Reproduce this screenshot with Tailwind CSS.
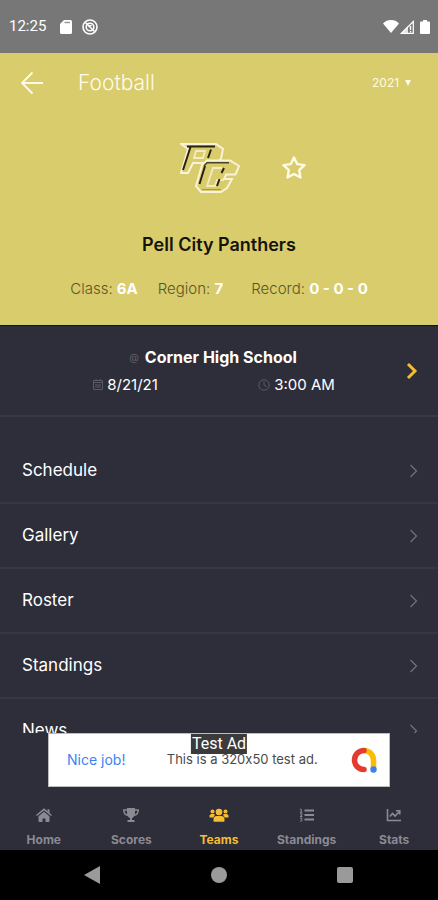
<!DOCTYPE html>
<html lang="en">
  <head>
    <meta charset="UTF-8" />
    <meta name="viewport" content="width=device-width, initial-scale=1.0" />
    <title>Pell City Panthers</title>
    <script src="https://cdn.jsdelivr.net/npm/@tailwindcss/browser@4"></script>
  </head>
  <body class="bg-[#2e2d3a] font-['Inter',sans-serif] text-white">
    <div class="flex flex-col h-screen overflow-hidden">
      <!-- status bar -->
      <div class="flex h-[53px] shrink-0 items-center bg-[#777777] px-2 font-['Roboto',sans-serif]">
        <span class="pl-px text-[15px]">12:25</span>
        <svg viewBox="0 0 12 14" fill="currentColor" class="ml-3.5 h-3.5 w-3">
          <path d="M4 0h6.5A1.5 1.5 0 0 1 12 1.500v11a1.500 1.500 0 0 1-1.500 1.500h-9A1.500 1.500 0 0 1 0 12.500V4z" />
          <path d="M4.500 2.500h5.500" stroke="#999" stroke-width="1.500" />
        </svg>
        <svg viewBox="0 0 16 16" fill="none" stroke="currentColor" class="ml-2.5 h-4 w-4">
          <circle cx="8" cy="8" r="7" stroke-width="1.600" />
          <circle cx="8" cy="8" r="3.800" stroke-width="1.600" />
          <path d="M3.500 3.500l9 9M7 8a1.500 1.500 0 0 1 2.500-1" stroke-width="1.500" />
        </svg>
        <svg viewBox="0 0 16 13" fill="currentColor" class="ml-auto h-[13px] w-4">
          <path d="M8 13L0 3.500C2 1 5 0 8 0s6 1 8 3.500z" />
        </svg>
        <svg viewBox="0 0 14 14" class="ml-px h-3.5 w-3.5">
          <path d="M13.300 1.500v11.800H1.500z" fill="none" stroke="currentColor" stroke-width="1.200" />
          <path d="M0 14L8 6v8z" fill="currentColor" opacity=".8" />
          <path d="M10.500 6v4M10.500 11v1.500" stroke="currentColor" stroke-width="1.400" />
        </svg>
        <svg viewBox="0 0 10 14" fill="currentColor" class="ml-1.5 h-3.5 w-2.5">
          <path d="M3 0h4v1.500h2a1 1 0 0 1 1 1V13a1 1 0 0 1-1 1H1a1 1 0 0 1-1-1V2.500a1 1 0 0 1 1-1h2z" />
        </svg>
      </div>

      <!-- team header -->
      <header class="shrink-0 border-b border-[#11121d] bg-[#d8cc6c] pb-6">
        <div class="flex h-[60px] items-center px-5">
          <button type="button" aria-label="Back">
            <svg viewBox="0 0 24 24" fill="none" stroke="#fffbe8" stroke-width="1.800" class="h-6 w-6">
              <path d="M23 12H2M12.500 1.500L2 12l10.500 10.500" />
            </svg>
          </button>
          <h1 class="ml-[34px] text-[21px] leading-6 font-light text-[#fffbe8]">Football</h1>
          <label class="ml-auto mr-1.5 flex items-center text-xs text-[#fffbe8]">
            <select aria-label="Season" class="w-8 appearance-none bg-transparent p-0">
              <option>2021</option>
            </select>
            <svg viewBox="0 0 8 8" fill="currentColor" class="h-2 w-2"><path d="M1 1h6L4 7z" /></svg>
          </label>
        </div>
        <div class="flex items-center justify-center gap-[42px] pt-[30px] pl-12">
          <svg viewBox="0 0 60 50" fill="none" class="h-[50px] w-[60px]">
            <path d="M1 .9H36L43 6 41 16 36 20H13L8 30H1L8 6z" stroke="#faf2d6" stroke-width="2" />
            <path d="M16 8h9l-2 7h-9z" stroke="#f5ebc0" stroke-width="1.800" />
            <path d="M7 3.500h28M10.500 4L3 27M31 6.500L28 15" stroke="#28240e" stroke-width="2" />
            <path d="M27 17.500H50L59 23 55.500 31.500H46L44 36H52L47 45 41 49H21L16 43 22 22z" fill="#d8cc6c" stroke="#faf2d6" stroke-width="2" />
            <path d="M42 25h-9l-6 18h8l2-6h7" stroke="#f5ebc0" stroke-width="1.800" />
            <path d="M25 23L19.500 41M44 25L41.500 30M39.500 36L37 43" stroke="#28240e" stroke-width="2" />
            <path d="M24 23l3-3.200h22" stroke="#4a441f" stroke-width="1.600" />
            <path d="M22 46.500h19" stroke="#a39955" stroke-width="1" />
          </svg>
          <button type="button" aria-label="Favorite">
            <svg viewBox="0 0 24 24" fill="none" stroke="#fffbe8" stroke-width="2.400" stroke-linejoin="round" class="h-6 w-6">
              <path d="M12 1.500l3.200 6.600 7.300 1-5.300 5.100 1.300 7.300L12 18l-6.500 3.500 1.300-7.300L1.500 9.100l7.300-1z" />
            </svg>
          </button>
        </div>
        <h2 class="mt-10 text-center text-lg leading-6 font-semibold text-[#15130a]">Pell City Panthers</h2>
        <div class="mt-5 flex justify-center gap-5 text-[15px] leading-6 font-light text-[#5c5627]">
          <p>Class: <b class="font-bold text-white">6A</b></p>
          <p>Region: <b class="font-bold text-white">7</b></p>
          <p class="ml-2">Record: <b class="font-bold text-white">0 - 0 - 0</b></p>
        </div>
      </header>

      <main class="min-h-0 flex-1 overflow-hidden">
        <!-- next game -->
        <a href="#game" class="flex h-[91px] items-center border-b-2 border-[#393844] pr-5">
          <div class="flex-1 pl-10">
            <p class="flex items-center justify-center gap-1.5 pl-1 text-base leading-6 font-bold">
              <span class="text-[10px] font-normal text-[#62616b]">@</span>Corner High School
            </p>
            <div class="mt-1 grid grid-cols-2 text-[15px] leading-6">
              <p class="flex items-center justify-center gap-1">
                <svg viewBox="0 0 10 11" fill="none" stroke="#5a5963" class="h-[11px] w-2.5">
                  <path d="M.5 1.500h9v9h-9zM.5 3.500h9M3 0v2M7 0v2M2 6h6M2 8h6" />
                </svg>
                8/21/21
              </p>
              <p class="flex items-center justify-center gap-1">
                <svg viewBox="0 0 12 12" fill="none" stroke="#5a5963" class="h-3 w-3">
                  <circle cx="6" cy="6" r="5.200" />
                  <path d="M6 2.500V6l2.500 1.500" />
                </svg>
                3:00 AM
              </p>
            </div>
          </div>
          <svg viewBox="0 0 12 18" fill="none" stroke="#f5bd31" stroke-width="3" class="ml-6 h-[18px] w-3">
            <path d="M2 2l7 7-7 7" />
          </svg>
        </a>

        <!-- menu -->
        <nav class="mt-[22px] text-[17px]">
          <a href="#schedule" class="flex h-[65px] items-center justify-between border-b-2 border-[#373642] pl-[22px] pr-5">
            Schedule
            <svg viewBox="0 0 8 14" fill="none" stroke="#73727d" stroke-width="1.200" class="h-3.5 w-2"><path d="M.5 1l6 6-6 6" /></svg>
          </a>
          <a href="#gallery" class="flex h-[65px] items-center justify-between border-b-2 border-[#373642] pl-[22px] pr-5">
            Gallery
            <svg viewBox="0 0 8 14" fill="none" stroke="#73727d" stroke-width="1.200" class="h-3.5 w-2"><path d="M.5 1l6 6-6 6" /></svg>
          </a>
          <a href="#roster" class="flex h-[65px] items-center justify-between border-b-2 border-[#373642] pl-[22px] pr-5">
            Roster
            <svg viewBox="0 0 8 14" fill="none" stroke="#73727d" stroke-width="1.200" class="h-3.5 w-2"><path d="M.5 1l6 6-6 6" /></svg>
          </a>
          <a href="#standings" class="flex h-[65px] items-center justify-between border-b-2 border-[#373642] pl-[22px] pr-5">
            Standings
            <svg viewBox="0 0 8 14" fill="none" stroke="#73727d" stroke-width="1.200" class="h-3.5 w-2"><path d="M.5 1l6 6-6 6" /></svg>
          </a>
          <a href="#news" class="flex h-[65px] items-center justify-between border-b-2 border-[#373642] pl-[22px] pr-5">
            News
            <svg viewBox="0 0 8 14" fill="none" stroke="#73727d" stroke-width="1.200" class="h-3.5 w-2"><path d="M.5 1l6 6-6 6" /></svg>
          </a>
        </nav>
      </main>

      <!-- ad banner -->
      <a href="#ad" class="relative mx-12 flex h-[54px] shrink-0 items-center justify-between border border-[#bcbcc1] bg-white pl-[18px] pr-3 text-[13px] [font-feature-settings:'calt'_0]">
        <span class="text-sm text-[#3c83ee]">Nice job!</span>
        <span class="pl-2 text-[#4b4b4b]">This is a 320x50 test ad.</span>
        <svg viewBox="0 0 26 26" fill="none" stroke-width="5.500" class="h-[26px] w-[26px]">
          <path d="M13 3.500a9.500 9.500 0 0 1 9.500 9.500v9" stroke="#fbbc05" />
          <path d="M13 3.500a9.500 9.500 0 0 0 0 19" stroke="#e33b2e" stroke-linecap="round" />
          <circle cx="22.500" cy="22.500" r="3.200" fill="#3b80ee" />
        </svg>
        <span class="absolute left-1/2 top-0 -translate-x-1/2 whitespace-nowrap bg-[#3b3b3b] px-px font-['Roboto',sans-serif] text-base leading-5 text-white">Test Ad</span>
      </a>

      <!-- tabs -->
      <nav class="grid h-[63px] shrink-0 grid-cols-5 pt-5 text-xs leading-4 font-bold text-[#8b8a93]">
        <a href="#home" class="flex flex-col items-center gap-[9px]">
          <svg viewBox="0 0 18 16" fill="currentColor" class="h-4 w-[18px]">
            <path d="M9 4.800l5.500 4.400V14a1 1 0 0 1-1 1h-3v-3.500h-3V15h-3a1 1 0 0 1-1-1V9.200z" />
            <path d="M1.500 8.500L9 2.300l7.500 6.200" fill="none" stroke="currentColor" stroke-width="1.500" />
            <path d="M12.500 2.200h2v4l-2-1.600z" />
          </svg>
          Home
        </a>
        <a href="#scores" class="flex flex-col items-center gap-[9px]">
          <svg viewBox="0 0 18 16" fill="currentColor" class="h-4 w-[18px]">
            <path d="M5 1h8v5c0 3-1.500 4.500-3 5v2h2.500v2h-7v-2H8v-2C6.500 10.500 5 9 5 6z" />
            <path d="M5 3H1.800c0 3 1.200 5 4.200 5.200M13 3h3.200c0 3-1.200 5-4.200 5.200" fill="none" stroke="currentColor" stroke-width="1.500" />
          </svg>
          Scores
        </a>
        <a href="#teams" aria-current="page" class="flex flex-col items-center gap-[9px] text-[#f5bd31]">
          <svg viewBox="0 0 20 16" fill="currentColor" class="h-4 w-5">
            <circle cx="10" cy="5" r="3.300" />
            <circle cx="3.500" cy="4.500" r="2" />
            <circle cx="16.500" cy="4.500" r="2" />
            <path d="M4.500 14v-2c0-2 1.500-3 3-3h5c1.500 0 3 1 3 3v2a.8.8 0 0 1-.8.8H5.300a.8.8 0 0 1-.8-.8zM.5 10V9c0-1 .8-2 2-2h2c.7 0 1.200.3 1.500.7L4.300 10.500H1a.5.500 0 0 1-.5-.5zM19.500 10V9c0-1-.8-2-2-2h-2c-.7 0-1.200.3-1.500.7l1.700 2.800H19a.5.500 0 0 0 .5-.5z" />
          </svg>
          Teams
        </a>
        <a href="#table" class="flex flex-col items-center gap-[9px]">
          <svg viewBox="0 0 16 16" fill="none" stroke="currentColor" class="h-4 w-4">
            <path d="M5.500 3.500H15M5.500 8H15M5.500 12.500H15" stroke-width="1.800" />
            <path d="M1 2.200h1.200V5M.8 5.200h2.700M1 6.800h2v1.200L1 9.500h2.400M1 11.200h2.200L2.200 12.500c1.600 0 1.300 2-1.200 1.600" />
          </svg>
          Standings
        </a>
        <a href="#stats" class="flex flex-col items-center gap-[9px]">
          <svg viewBox="0 0 16 16" fill="none" stroke="currentColor" stroke-width="1.600" class="h-4 w-4">
            <path d="M1.500 2v11.500H15" />
            <path d="M3.800 9.500L6.500 6.500l2.500 2.500 4-4M10 3.800h3.800V7.500" />
          </svg>
          Stats
        </a>
      </nav>

      <!-- system buttons -->
      <div class="flex h-[50px] shrink-0 items-center justify-center gap-[110px] bg-black pr-0.5 text-[#9a9a9a]">
        <button type="button" aria-label="System back">
          <svg viewBox="0 0 18 18" fill="currentColor" class="h-[18px] w-[18px]"><path d="M1 9L17 0v18z" /></svg>
        </button>
        <button type="button" aria-label="System home" class="h-4 w-4 rounded-full bg-current"></button>
        <button type="button" aria-label="Recent apps" class="h-4 w-4 rounded-xs bg-current"></button>
      </div>
    </div>
  </body>
</html>
